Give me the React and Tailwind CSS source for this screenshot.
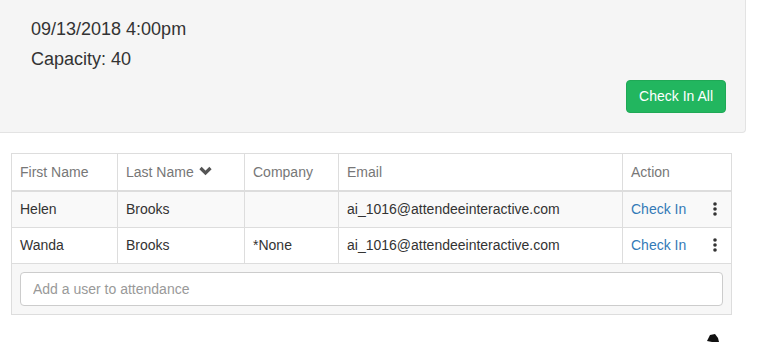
import { useState } from "react";

const attendees = [
	{ first: "Helen", last: "Brooks", company: "", email: "ai_1016@attendeeinteractive.com" },
	{ first: "Wanda", last: "Brooks", company: "*None", email: "ai_1016@attendeeinteractive.com" },
];

// little three-dot menu icon
function Kebab() {
	return (
		<svg width="4" height="14" viewBox="0 0 4 14" className="block">
			<circle cx="2" cy="2" r="1.8" fill="#333" />
			<circle cx="2" cy="7" r="1.8" fill="#333" />
			<circle cx="2" cy="12" r="1.8" fill="#333" />
		</svg>
	);
}

function Chevron() {
	return (
		<svg width="13" height="10" viewBox="0 0 13 10" className="inline-block ml-[5px] -mt-[4px] align-middle">
			<path d="M1.5 2 L6.5 7 L11.5 2" fill="none" stroke="#555" strokeWidth="3.2" />
		</svg>
	);
}

export default function App() {
	const [query, setQuery] = useState(""); // add user input
	return (
		<div className="w-[761px] h-[342px] overflow-hidden bg-white font-['Liberation_Sans',Arial,sans-serif] text-[14px] text-[#333] relative">
			{/* event info panel */}
			<div className="w-[746px] h-[133px] bg-[#f5f5f5] border-r border-b border-[#e3e3e3] rounded-br-[4px] pl-[31px] pr-[19px] pt-[20px]">
				<h4 className="text-[18px] leading-[19.8px] text-[#333]">09/13/2018 4:00pm</h4>
				<h4 className="text-[18px] leading-[19.8px] text-[#333] mt-[10px]">Capacity: 40</h4>
				<div className="flex justify-end mt-[10px]">
					<button className="h-[33px] px-[12px] bg-[#22b65f] border border-[#1fa956] text-white rounded-[4px] text-[14px] leading-[20px]">
						Check In All
					</button>
				</div>
			</div>

			{/* attendance table */}
			<div className="ml-[11px] mt-[20px] w-[720px]">
				<table className="w-[720px] border-collapse table-fixed border border-[#ddd]">
					<colgroup>
						<col className="w-[106px]" />
						<col className="w-[127px]" />
						<col className="w-[94px]" />
						<col className="w-[284px]" />
						<col className="w-[109px]" />
					</colgroup>
					<thead>
						<tr className="text-[#777] text-left">
							<th className="font-normal border border-[#ddd] border-b-2 px-[8px] py-[8px] leading-[20px]">First Name</th>
							<th className="font-normal border border-[#ddd] border-b-2 px-[8px] py-[8px] leading-[20px]">
								Last Name
								<Chevron />
							</th>
							<th className="font-normal border border-[#ddd] border-b-2 px-[8px] py-[8px] leading-[20px]">Company</th>
							<th className="font-normal border border-[#ddd] border-b-2 px-[8px] py-[8px] leading-[20px]">Email</th>
							<th className="font-normal border border-[#ddd] border-b-2 px-[8px] py-[8px] leading-[20px]">Action</th>
						</tr>
					</thead>
					<tbody>
						{attendees.map((a, i) => (
							<tr key={i} className={i % 2 === 0 ? "bg-[#f9f9f9] h-[36px]" : "bg-white h-[36px]"}>
								<td className="border border-[#ddd] px-[8px] py-0 leading-[20px]">{a.first}</td>
								<td className="border border-[#ddd] px-[8px] py-0 leading-[20px]">{a.last}</td>
								<td className="border border-[#ddd] px-[8px] py-0 leading-[20px]">{a.company}</td>
								<td className="border border-[#ddd] px-[8px] py-0 leading-[20px]">{a.email}</td>
								<td className="border border-[#ddd] px-[8px] py-0 leading-[20px]">
									<div className="flex items-center justify-between pr-[6px]">
										<a href="#" className="text-[#337ab7]">Check In</a>
										<Kebab />
									</div>
								</td>
							</tr>
						))}
						<tr className="bg-[#f7f7f7]">
							<td colSpan={5} className="border border-[#ddd] p-[8px]">
								<input
									type="text"
									value={query}
									onChange={(e) => setQuery(e.target.value)}
									placeholder="Add a user to attendance"
									className="block w-full h-[34px] px-[12px] bg-white border border-[#ccc] rounded-[4px] text-[14px] text-[#555] placeholder:text-[#999] outline-none"
								/>
							</td>
						</tr>
					</tbody>
				</table>
			</div>

			{/* stray cursor glyph bottom right */}
			<svg width="14" height="8" viewBox="0 0 14 8" className="absolute left-[706px] top-[334px]">
				<path d="M4 1 L9 0 L12 4 L13 8 L6 8 L1 7 Z" fill="#111" />
			</svg>
		</div>
	);
}
